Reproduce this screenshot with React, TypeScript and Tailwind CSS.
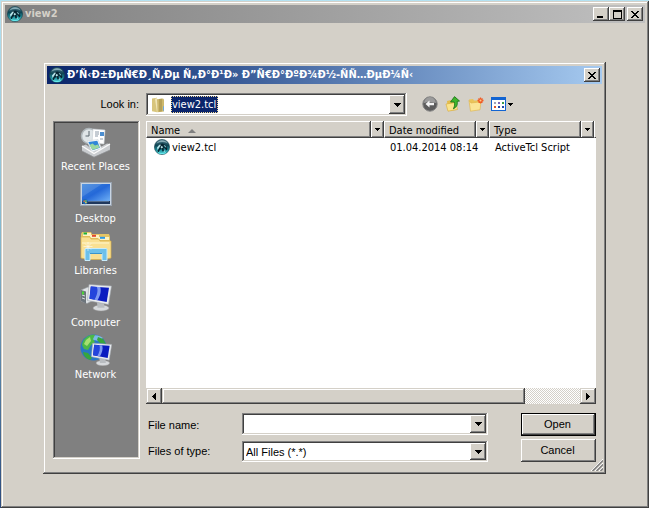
import React from "react";

const windowBevel =
  "bg-[#d4d0c8] shadow-[inset_-1px_-1px_#404040,inset_1px_1px_#d4d0c8,inset_-2px_-2px_#808080,inset_2px_2px_#fff]";
const buttonBevel =
  "bg-[#d4d0c8] shadow-[inset_-1px_-1px_#404040,inset_1px_1px_#fff,inset_-2px_-2px_#808080,inset_2px_2px_#d4d0c8]";
const sunken =
  "shadow-[inset_-1px_-1px_#fff,inset_1px_1px_#808080,inset_-2px_-2px_#d4d0c8,inset_2px_2px_#404040]";
const shellFont = "font-['Liberation_Sans',Arial,sans-serif]";

const TclIcon: React.FC = () => (
  <svg width="16" height="16" viewBox="0 0 16 16" className="shrink-0" aria-hidden="true">
    <defs>
      <linearGradient id="orb" x1="0" y1="0" x2="0" y2="1">
        <stop offset="0" stopColor="#4d7484" />
        <stop offset="0.4" stopColor="#0e4655" />
        <stop offset="0.7" stopColor="#1f909c" />
        <stop offset="1" stopColor="#5be2e6" />
      </linearGradient>
    </defs>
    <circle cx="8" cy="8" r="7.6" fill="url(#orb)" stroke="#12414e" strokeWidth=".6" />
    <path d="M2.500 4.500C4 2 6 1.200 8 1.200s4.500 1 5.600 3C10 2.600 6 2.800 2.500 4.500z" fill="#86abb6" />
    <path d="M5 5l4-.5 3 2 1.500 3.500-1 1.500-2-2.500-1-.5.5 3.500-1.500.5-1-3-2 2-1 2-1-1.500 2-3.500z" fill="#062431" />
    <path d="M3 8.500l2.500-3 1.500.2-1.500 2.500L3.500 11zM6.500 8l1.500-1.300 1 1.800-1.500 1z" fill="#b8e4e8" />
    <path d="M9.500 5.800l2 1 .8 2-1.500-1zM10 10.500l1.200 2.200-1.400.5z" fill="#8fd3da" />
    <path d="M4 13.600c2 1.300 6 1.300 8 0" stroke="#6ff0f2" strokeWidth=".8" fill="none" />
  </svg>
);

const DownArrow: React.FC = () => (
  <svg width="7" height="4" viewBox="0 0 7 4" shapeRendering="crispEdges" aria-hidden="true">
    <path d="M0 0h7v1H6v1H5v1H4v1H3V3H2V2H1V1H0z" />
  </svg>
);

const CloseIcon: React.FC = () => (
  <svg width="8" height="7" viewBox="0 0 8 7" shapeRendering="crispEdges" aria-hidden="true">
    <path d="M0 0h2v1h1v1h2V1h1V0h2v1H7v1H6v1H5v1h1v1h1v1h1v1H6V6H5V5H3v1H2v1H0V6h1V5h1V4h1V3H2V2H1V1H0z" />
  </svg>
);

const FolderIcon: React.FC = () => (
  <svg width="16" height="16" viewBox="0 0 16 16" className="shrink-0" aria-hidden="true">
    <path d="M2 1.5l5-.8v14.5l-5-1z" fill="#d8c57c" />
    <path d="M5 2l2-1.5 1 14-1 1z" fill="#f0e5b5" />
    <path d="M7 2.2l6-.8 1 1v12.1l-6.5.8z" fill="#cdb86c" />
    <path d="M9 2l3-.3v12.6l-3 .4z" fill="#b6a158" />
    <path d="M13 9l1 .5v4l-1 .5z" fill="#6fa8d8" />
  </svg>
);

const BackIcon: React.FC = () => (
  <svg width="16" height="16" viewBox="0 0 16 16" aria-hidden="true">
    <circle cx="8" cy="8" r="7.2" fill="#5c5c5c" stroke="#858585" />
    <path d="M2 7a6 6 0 0 1 12 0c-3-1.500-9-1.500-12 0z" fill="#9b9b9b" />
    <path d="M3.500 8l4-3.500v2.300h4.500v2.400H7.500v2.300z" fill="#f4f4f4" />
  </svg>
);

const UpIcon: React.FC = () => (
  <svg width="16" height="16" viewBox="0 0 16 16" aria-hidden="true">
    <path d="M2 5l4-1 1 1.2 5-.7-1 9.5-8 1z" fill="#e3bd4c" />
    <path d="M1 8l10-1.5 1.5 7L3 15.2z" fill="#fbe48b" stroke="#d8aa38" strokeWidth=".6" />
    <path d="M9.500.6L14.500 5l-2.300.4c.6 3-.3 5.600-3.800 7.400C9.800 10 9.800 8 9.200 6L5.500 6z" fill="#3fb52c" stroke="#167014" strokeWidth=".8" />
  </svg>
);

const NewFolderIcon: React.FC = () => (
  <svg width="16" height="16" viewBox="0 0 16 16" aria-hidden="true">
    <path d="M1 3.5l4-.5 1 1.5 6-.3v3L3 14z" fill="#eac45a" />
    <path d="M3 7l10-1.2-1 8-9.5 1.4L1 4.5z" fill="#fbe596" stroke="#ddb247" strokeWidth=".6" />
    <path d="M12.500 1.500v6M9.500 4.500h6M10.500 2.500l4 4M14.500 2.500l-4 4" stroke="#ef5a24" strokeWidth="1.300" />
    <circle cx="12.5" cy="4.5" r="1" fill="#ffc48a" />
  </svg>
);

const ViewsIcon: React.FC = () => (
  <svg width="22" height="14" viewBox="0 0 22 14" shapeRendering="crispEdges" aria-hidden="true">
    <rect width="15" height="14" rx="1" fill="#1264d2" />
    <rect x="1" y="3" width="13" height="10" fill="#fff" />
    <path d="M3 5h2v2H3z" fill="#a0a4b8" />
    <path d="M7 5h2v2H7z" fill="#7c66b8" />
    <path d="M11 5h2v2h-2z" fill="#3b9a48" />
    <path d="M3 9h2v2H3z" fill="#e0562c" />
    <path d="M7 9h2v2H7z" fill="#2348a8" />
    <path d="M11 9h2v2h-2z" fill="#2348a8" />
    <path d="M17 6h5v1h-1v1h-1v1h-1V8h-1V7h-1z" fill="#000" />
  </svg>
);

const RecentIcon: React.FC = () => (
  <svg width="32" height="32" viewBox="0 0 32 32" aria-hidden="true">
    <circle cx="9" cy="10" r="7.500" fill="#dfe5e8" stroke="#aeb6ba" strokeWidth="1.500" />
    <path d="M9 5V10H5.500" stroke="#59646c" fill="none" />
    <path d="M13 3l12 1-1 14-12-1z" fill="#fff" stroke="#c6cdd2" strokeWidth=".6" />
    <path d="M15 6h4M15 8h4M15 10h3M20 13h3" stroke="#8d9aa8" />
    <path d="M20 6h4v4h-4z" fill="#4c8ed0" />
    <path d="M2 20l4-1.500 8 6 13-7 3 .5V24l-16 7-12-6z" fill="#c9cccf" />
    <path d="M7 15l11-1.500 3.500 9-9.500 3.500z" fill="#f7fbfd" stroke="#cbd2d6" strokeWidth=".6" />
    <path d="M8.300 16l9-1.300 2.600 7-7.400 2.600z" fill="#2f86d8" />
    <path d="M9.500 19l3-1.500 2.500 2 3-1 1.500 3-7 2.500z" fill="#9ad8a0" />
    <path d="M2 20l12 7.500 16-9.500" stroke="#fbfbfb" fill="none" strokeWidth="1.400" />
    <path d="M2 25l12 6.300L30 24" stroke="#8f9295" fill="none" strokeWidth=".7" />
  </svg>
);

const DesktopIcon: React.FC = () => (
  <svg width="32" height="32" viewBox="0 0 32 32" aria-hidden="true">
    <defs>
      <linearGradient id="desk" x1="0" y1="0" x2="1" y2="1">
        <stop offset="0" stopColor="#3c86dc" />
        <stop offset="0.5" stopColor="#2468d8" />
        <stop offset="1" stopColor="#6fb0f6" />
      </linearGradient>
    </defs>
    <rect x=".5" y="4.5" width="31" height="23" fill="#c8d4e2" stroke="#98a2ae" />
    <rect x="2" y="6" width="28" height="17" fill="url(#desk)" />
    <path d="M2 6h20L2 19z" fill="#fff" opacity=".13" />
    <rect x="2" y="23" width="28" height="3" fill="#20385c" />
    <path d="M8 23.300h21" stroke="#8ca4c4" strokeWidth=".6" />
    <circle cx="5" cy="23.6" r="2.6" fill="#1a68b8" />
    <path d="M3.5 22.5h1.4v1.4H3.5z" fill="#f06a30" />
    <path d="M5.2 22.3h1.4v1.4H5.2z" fill="#84d044" />
    <path d="M5.2 24.1h1.4v1.2H5.2z" fill="#fcd444" />
  </svg>
);

const LibrariesIcon: React.FC = () => (
  <svg width="32" height="32" viewBox="0 0 32 32" aria-hidden="true">
    <path d="M1 4l1-2h9l1 2h17l1 3v19H1z" fill="#e6c564" />
    <path d="M3 3h8v3H3z" fill="#fdf4c4" />
    <path d="M3.5 2.5H7v2H3.5z" fill="#1ab03c" />
    <path d="M10 5h9v3h-9z" fill="#fdf4c4" />
    <path d="M12 4.8h4v2h-4z" fill="#e24630" />
    <path d="M18 7h11v3H18z" fill="#fdf4c4" />
    <path d="M20 6.8h5v2h-5z" fill="#2c9ae8" />
    <path d="M1 7h9l1 2h8l1 2h11v17l-8 1.5H8L1 28z" fill="#f9e093" stroke="#d8b048" strokeWidth=".7" />
    <path d="M2 13h27" stroke="#fff6cc" />
    <path d="M5 30.500V19.500q0-1 1-1h20q1 0 1 1v11h-5v-7H10v7z" fill="#6cc0ea" stroke="#c8ecfb" />
    <path d="M10 23.500h12" stroke="#3a94cc" />
    <path d="M8 12v9M3.5 16.5h9M5 13.5l6 6M11 13.5l-6 6" stroke="#fff" strokeWidth=".7" opacity=".8" />
  </svg>
);

const Monitor: React.FC = () => (
  <>
    <ellipse cx="21" cy="26" rx="8" ry="3" fill="#d6d9dc" stroke="#999" strokeWidth=".5" />
    <path d="M17 20l7 .8.5 5h-7z" fill="#b8bcc0" />
    <path d="M9 2.500L31.500 4l-3 18.500L7.500 18.500z" fill="#e9ecef" stroke="#9fa5ab" strokeWidth=".6" />
    <path d="M10.800 4.500L29 5.700l-2.300 14.200L9.500 16.800z" fill="#0a1cc0" />
    <path d="M10.800 4.500l6 .4c1.500 4 0 8-2.300 12.700l-5-.8z" fill="#2444dc" />
    <path d="M16.800 4.900l3.500.2c1.200 5-.3 9-2.800 13.200l-3-.6c2.300-4.700 3.800-8.800 2.300-12.800z" fill="#7d98f2" />
  </>
);

const ComputerIcon: React.FC = () => (
  <svg width="32" height="32" viewBox="0 0 32 32" aria-hidden="true">
    <path d="M1 8l7-3 4 1.500V19l-5 2.500L1 19z" fill="#dfe3e6" stroke="#93999e" strokeWidth=".6" />
    <path d="M1 8l5 1.500v12L1 19z" fill="#6d757c" />
    <path d="M2 13l3 1M2 16l3 1" stroke="#d8dde0" />
    <path d="M2 9.500h1.800v3H2z" fill="#46e030" />
    <Monitor />
  </svg>
);

const NetworkIcon: React.FC = () => (
  <svg width="32" height="32" viewBox="0 0 32 32" aria-hidden="true">
    <circle cx="13.500" cy="13.500" r="13" fill="#2877c4" />
    <path d="M3 9a13 13 0 0 1 20-5l-5 3C13 5 8 6 3 9z" fill="#9fd4f6" opacity=".7" />
    <path d="M5 4.5C9 1 12 .6 15 1l-2 4 2 3-4 3-3 5-4-1-2-4c.4-3 1.500-5 3-6.500z" fill="#4cb848" />
    <path d="M18 3l5 2 3 5-6-1-3-3zM3 18l5 1 4 5-2 2C6 24.500 3.500 22 3 18z" fill="#36a63c" />
    <path d="M6 6l4-3 1 4-4 5-3-2z" fill="#a6e070" />
    <g transform="translate(5 7) scale(.85)">
      <Monitor />
    </g>
  </svg>
);

const places = [
  { name: "Recent Places", Icon: RecentIcon },
  { name: "Desktop", Icon: DesktopIcon },
  { name: "Libraries", Icon: LibrariesIcon },
  { name: "Computer", Icon: ComputerIcon },
  { name: "Network", Icon: NetworkIcon },
];

const columns = [
  { title: "Name", width: "w-[238px]", sorted: true },
  { title: "Date modified", width: "w-[105px]", sorted: false },
  { title: "Type", width: "", sorted: false },
];

const files = [
  { name: "view2.tcl", modified: "01.04.2014 08:14", type: "ActiveTcl Script" },
];

const CaptionButton: React.FC<{ label: string; children: React.ReactNode }> = ({
  label,
  children,
}) => (
  <button
    type="button"
    aria-label={label}
    className={`flex h-[14px] w-4 items-center justify-center ${buttonBevel}`}
  >
    {children}
  </button>
);

const FileTable: React.FC = () => (
  <table className="w-full table-fixed border-collapse text-left">
    <thead>
      <tr>
        {columns.map((col) => (
          <th key={col.title} scope="col" className={`p-0 font-normal ${col.width}`}>
            <div className="flex h-[17px] bg-[#d4d0c8]">
              <button
                type="button"
                className="flex flex-1 items-center gap-2 border-t border-b border-l border-t-white border-b-[#404040] border-l-white pt-[2px] pl-1 shadow-[inset_-1px_-1px_#808080]"
              >
                {col.title}
                {col.sorted && (
                  <svg width="8" height="4" viewBox="0 0 8 4" aria-hidden="true">
                    <path d="M4 0l4 4H0z" fill="#808080" />
                  </svg>
                )}
              </button>
              <button
                type="button"
                aria-label={`Filter by ${col.title}`}
                className={`flex w-[14px] items-center justify-center border-l border-l-[#404040] ${buttonBevel}`}
              >
                <svg width="5" height="3" viewBox="0 0 5 3" shapeRendering="crispEdges" aria-hidden="true">
                  <path d="M0 0h5v1H4v1H3v1H2V2H1V1H0z" />
                </svg>
              </button>
              {col.title === "Type" && (
                <span className="w-[2px] border-b border-l border-b-[#404040] border-l-white" />
              )}
            </div>
          </th>
        ))}
      </tr>
    </thead>
    <tbody>
      {files.map((file) => (
        <tr key={file.name} className="h-[18px]">
          <td className="p-0 pl-2">
            <span className="flex items-center gap-[2px]">
              <TclIcon />
              <span className="pt-[2px]">{file.name}</span>
            </span>
          </td>
          <td className="p-0 pt-[2px] pl-[6px] whitespace-nowrap">{file.modified}</td>
          <td className="p-0 pt-[2px] pl-[6px] whitespace-nowrap">{file.type}</td>
        </tr>
      ))}
    </tbody>
  </table>
);

const ScrollBar: React.FC = () => (
  <div className="flex h-4 bg-[repeating-conic-gradient(#fff_0_25%,#d4d0c8_0_50%)] bg-[length:2px_2px]">
    <button
      type="button"
      aria-label="Scroll left"
      className={`flex w-4 items-center justify-center ${windowBevel}`}
    >
      <svg width="4" height="7" viewBox="0 0 4 7" shapeRendering="crispEdges" aria-hidden="true">
        <path d="M4 0v7H3V6H2V5H1V4H0V3h1V2h1V1h1V0z" />
      </svg>
    </button>
    <div className={`flex-1 ${windowBevel}`} />
    <div className="w-[55px]" />
    <button
      type="button"
      aria-label="Scroll right"
      className={`flex w-4 items-center justify-center ${windowBevel}`}
    >
      <svg width="4" height="7" viewBox="0 0 4 7" shapeRendering="crispEdges" aria-hidden="true">
        <path d="M0 0v7h1V6h1V5h1V4h1V3H3V2H2V1H1V0z" />
      </svg>
    </button>
  </div>
);

const FileForm: React.FC = () => (
  <div className={`mt-[9px] flex flex-col gap-[3px] ${shellFont}`}>
    <div className="flex h-[23px] items-start">
      <label htmlFor="file-name" className="w-24 self-center pl-[2px]">
        File name:
      </label>
      <div className={`flex h-[22px] flex-1 bg-white p-[2px] ${sunken}`}>
        <input id="file-name" type="text" className="min-w-0 flex-1 bg-transparent px-[2px] outline-none" />
        <button
          type="button"
          aria-label="Show file names"
          className={`flex w-4 items-center justify-center ${buttonBevel}`}
        >
          <DownArrow />
        </button>
      </div>
      <button
        type="button"
        className={`ml-[33px] h-[23px] w-[75px] border border-black pr-[2px] pb-[2px] ${buttonBevel}`}
      >
        Open
      </button>
    </div>
    <div className="flex h-[23px] items-end">
      <label htmlFor="file-type" className="w-24 self-center pl-[2px]">
        Files of type:
      </label>
      <div className={`flex h-[21px] flex-1 bg-white p-[2px] ${sunken}`}>
        <select id="file-type" className="min-w-0 flex-1 appearance-none bg-transparent pl-[2px] outline-none">
          <option>All Files (*.*)</option>
        </select>
        <span className={`flex w-4 items-center justify-center ${buttonBevel}`}>
          <DownArrow />
        </span>
      </div>
      <button type="button" className={`ml-[33px] h-[23px] w-[75px] pr-[2px] pb-[2px] ${buttonBevel}`}>
        Cancel
      </button>
    </div>
  </div>
);

const OpenDialog: React.FC = () => (
  <section
    role="dialog"
    aria-labelledby="dialog-title"
    className={`relative flex flex-1 flex-col p-1 ${windowBevel}`}
  >
    <header className="flex h-[18px] items-center bg-gradient-to-r from-[#0a246a] to-[#a6caf0] px-[2px]">
      <TclIcon />
      <h2
        id="dialog-title"
        className="ml-[2px] flex-1 overflow-hidden font-bold whitespace-nowrap text-white"
      >
        Ð’Ñ‹Ð±ÐµÑ€Ð¸Ñ‚Ðµ Ñ„Ð°Ð¹Ð» Ð”Ñ€Ð°ÐºÐ¾Ð½-ÑÑ…ÐµÐ¼Ñ‹
      </h2>
      <CaptionButton label="Close dialog">
        <CloseIcon />
      </CaptionButton>
    </header>

    <div className="mt-[9px] flex h-[23px] items-center px-[6px]">
      <label htmlFor="look-in" className={`w-[93px] pr-[7px] pb-[2px] text-right ${shellFont}`}>
        Look in:
      </label>
      <div className={`flex h-full w-[261px] items-center bg-white p-[2px] pl-1 ${sunken}`}>
        <FolderIcon />
        <select
          id="look-in"
          className="ml-[5px] h-[17px] appearance-none border border-dotted border-[#f5db95] bg-[#0a246a] text-white outline-none"
        >
          <option>view2.tcl</option>
        </select>
        <span className={`ml-auto flex w-4 items-center justify-center self-stretch ${buttonBevel}`}>
          <DownArrow />
        </span>
      </div>
      <nav className="ml-[15px] flex items-center gap-[7px] pb-[2px]">
        <button type="button" aria-label="Back">
          <BackIcon />
        </button>
        <button type="button" aria-label="Up one level">
          <UpIcon />
        </button>
        <button type="button" aria-label="New folder">
          <NewFolderIcon />
        </button>
        <button type="button" aria-label="Views">
          <ViewsIcon />
        </button>
      </nav>
    </div>

    <div className="mt-[5px] flex flex-1 gap-[6px] px-[6px] pb-2">
      <aside
        className={`mb-[3px] flex w-[87px] flex-col bg-[#808080] pt-[5px] pr-[2px] ${sunken}`}
      >
        {places.map(({ name, Icon }) => (
          <button
            key={name}
            type="button"
            className="flex h-[52px] flex-col items-center justify-start text-white"
          >
            <Icon />
            <span className="leading-[18px] whitespace-nowrap">{name}</span>
          </button>
        ))}
      </aside>
      <div className="flex min-w-0 flex-1 flex-col">
        <div className="flex-1 bg-white">
          <FileTable />
        </div>
        <ScrollBar />
        <FileForm />
      </div>
    </div>

    <svg
      width="12"
      height="12"
      viewBox="0 0 12 12"
      className="absolute right-[3px] bottom-[3px]"
      aria-hidden="true"
    >
      <path d="M0 12L12 0M4 12l8-8M8 12l4-4" stroke="#fff" />
      <path d="M1.500 12L12 1.500M5.500 12L12 5.500M9.500 12L12 9.500" stroke="#808080" strokeWidth="1.500" />
    </svg>
  </section>
);

const App: React.FC = () => {
  return (
    <div className="flex min-h-screen flex-col bg-gradient-to-b from-[#b4e2f2] via-[#7fb4cc] to-[#2c4a7c] pt-px pl-px font-['DejaVu_Sans_Condensed','Noto_Sans',sans-serif] text-[11px] leading-[14px] text-black">
      <main className={`flex flex-1 flex-col p-1 ${windowBevel}`}>
        <header className="flex h-[18px] items-center bg-gradient-to-r from-[#808080] to-[#c0c0c0] px-[2px] text-[#d4d0c8]">
          <TclIcon />
          <h1 className="ml-[2px] flex-1 font-bold">view2</h1>
          <div className="flex text-black">
            <CaptionButton label="Minimize">
              <span className="mt-[6px] mr-[2px] h-[2px] w-[6px] bg-black" />
            </CaptionButton>
            <CaptionButton label="Maximize">
              <span className="h-[9px] w-[9px] border border-t-2 border-black" />
            </CaptionButton>
          </div>
          <div className="ml-[2px]">
            <CaptionButton label="Close">
              <CloseIcon />
            </CaptionButton>
          </div>
        </header>
        <div className="flex flex-1 flex-col pt-[39px] pr-[39px] pb-[30px] pl-[38px]">
          <OpenDialog />
        </div>
      </main>
    </div>
  );
};

export default App;
